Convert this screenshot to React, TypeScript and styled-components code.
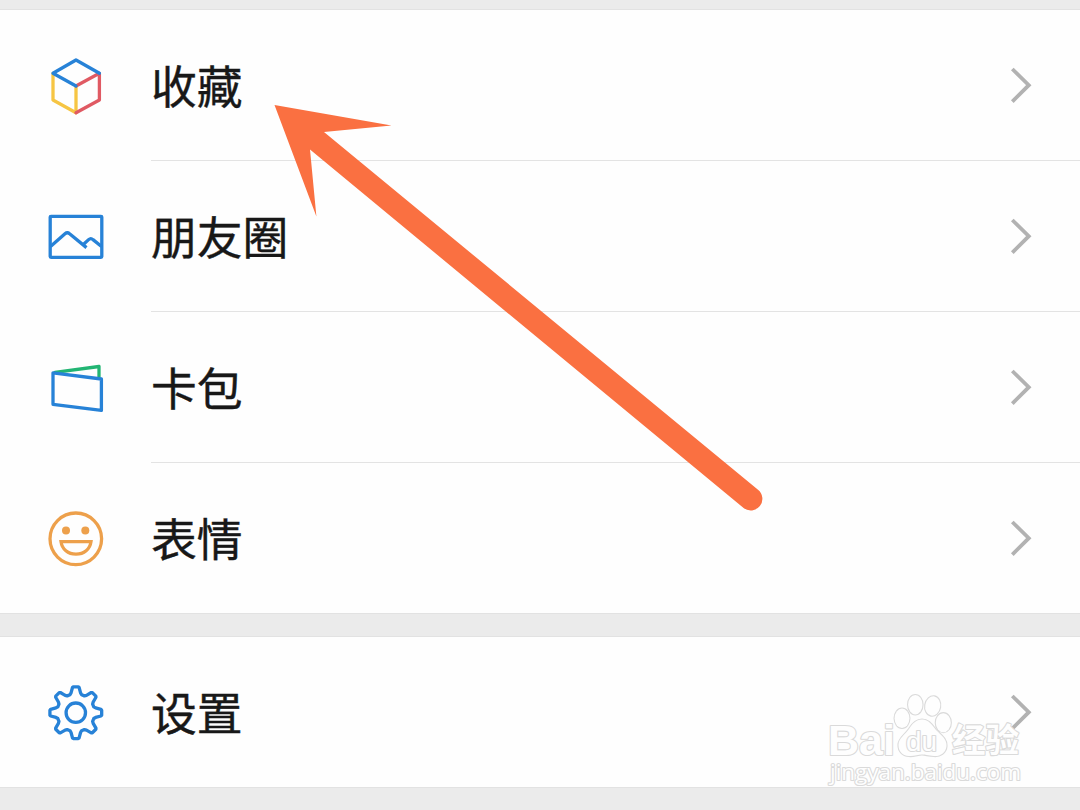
import React from "react";
import styled, { createGlobalStyle } from "styled-components";

// ===================== GLOBAL =====================
const GlobalStyle = createGlobalStyle`
  * { box-sizing: border-box; }
  body {
    margin: 0;
    background: #ebebeb;
    font-family: "Noto Sans CJK SC", sans-serif;
  }
`;

// ===================== STYLED COMPONENTS =====================
const Screen = styled.main`
  position: relative;
  width: 1080px;
  height: 810px;
  overflow: hidden;
  background: #ebebeb;
  padding-top: 9px;
  display: flex;
  flex-direction: column;
  gap: 22px;
`;

const Group = styled.section`
  background: #fefefe;
  border-top: 1px solid #e2e2e2;
  border-bottom: 1px solid #e2e2e2;
`;

const Row = styled.div`
  display: flex;
  align-items: flex-start;
  padding-left: 46px;
`;

const IconBox = styled.div`
  display: flex;
  align-items: center;
  width: 105px;
  height: 150px;

  svg {
    display: block;
    width: 60px;
    height: 60px;
    fill: none;
    stroke-width: 3.3;
    stroke-linecap: round;
    stroke-linejoin: round;
  }
`;

const RowBody = styled.div<{ $divider: boolean }>`
  flex: 1;
  height: ${({ $divider }) => ($divider ? "151px" : "150px")};
  display: flex;
  align-items: center;
  justify-content: space-between;
  padding-right: 47px;
  border-bottom: ${({ $divider }) => ($divider ? "1px solid #e3e3e3" : "none")};
`;

const Label = styled.span`
  font-size: 45.8px;
  line-height: 60px;
  color: #181818;
  padding-bottom: 3px;
  -webkit-text-stroke: 0.4px #181818;
`;

const Chevron = styled.svg`
  display: block;
  width: 24px;
  height: 40px;
  fill: none;
  stroke: #b2b2b2;
  stroke-width: 3.8;
`;

const Overlay = styled.svg`
  position: absolute;
  top: 0;
  left: 0;
  pointer-events: none;
`;

// ===================== ICONS =====================
const BLUE = "#2782d7";

const CubeIcon = () => (
  <svg viewBox="0 0 60 60">
    <path d="M7 18.3V45L30 57.7V31" stroke="#f6c543" />
    <path d="M30 57.7L53.4 45V18.3L30 31" stroke="#e05a63" />
    <path d="M30 31L7 18.3L30 5L53.4 18.3" stroke={BLUE} />
  </svg>
);

const PhotoIcon = () => (
  <svg viewBox="0 0 60 60" stroke={BLUE}>
    <rect x="4.2" y="10.3" width="51.6" height="41" rx="0.8" />
    <path
      d="M4.5 40.5L19 27.8Q21.3 25.8 23.6 27.8L40.5 41.6M36.5 39.3L42.6 33.6Q44.8 31.6 47 33.6L55.5 40.5"
      strokeLinecap="butt"
    />
  </svg>
);

const CardIcon = () => (
  <svg viewBox="0 0 60 60">
    <path d="M9 15.3L53 9.5V20" stroke="#22b573" />
    <path d="M7 15.8L55.4 22V53.4L7 47.3Z" stroke={BLUE} />
  </svg>
);

const SmileIcon = () => (
  <svg viewBox="0 0 60 60" stroke="#eda04b">
    <circle cx="29.8" cy="30.8" r="25.8" />
    <circle cx="20" cy="22.5" r="4" fill="#eda04b" stroke="none" />
    <circle cx="39.3" cy="22.5" r="4" fill="#eda04b" stroke="none" />
    <path d="M15 33.6H45C44 41.2 38 46.2 30 46.2S16 41.2 15 33.6Z" strokeLinejoin="miter" />
  </svg>
);

const TEETH = [0, 45, 90, 135, 180, 225, 270, 315];

// each tooth as [angle offset, radius] pairs
const TOOTH = [
  [-18, 18.9],
  [-13.5, 20.4],
  [-7.5, 25.4],
  [-5.5, 26],
  [5.5, 26],
  [7.5, 25.4],
  [13.5, 20.4],
  [18, 18.9],
];

const gearPoints = TEETH.flatMap((tooth) =>
  TOOTH.map(([offset, radius]) => {
    const a = ((tooth + offset) * Math.PI) / 180;
    return `${(29.8 + radius * Math.sin(a)).toFixed(2)},${(30.7 - radius * Math.cos(a)).toFixed(2)}`;
  }),
).join(" ");

const GearIcon = () => (
  <svg viewBox="0 0 60 60" stroke={BLUE}>
    <polygon points={gearPoints} />
    <circle cx="29.8" cy="30.7" r="9.7" />
  </svg>
);

// ===================== OVERLAYS =====================
const Arrow = () => (
  <Overlay width="1080" height="810" viewBox="0 0 1080 810">
    <path
      d="M274.5 105L391.5 125.5L324 132L758 489.8A11.6 11.6 0 0 1 743.6 508L310 149.6L316.4 216.5Z"
      fill="#fa7041"
    />
  </Overlay>
);

const Mark = styled.g`
  fill: #fefefe;
  stroke: #dadada;
  stroke-width: 2.2;
  stroke-linejoin: round;
  paint-order: stroke;
  font-family: "Open Sans", sans-serif;
`;

const Watermark = () => (
  <Overlay width="1080" height="810" viewBox="0 0 1080 810">
    <Mark>
      <text x="828" y="754.5" fontSize="43" fontWeight="700" fontFamily="Liberation Sans" textLength="67" lengthAdjust="spacingAndGlyphs">
        Bai
      </text>
      <g strokeWidth="2.2">
        <ellipse cx="902" cy="718.3" rx="7.4" ry="9.7" />
        <ellipse cx="915.3" cy="704.7" rx="7.2" ry="9.7" />
        <ellipse cx="932.7" cy="706" rx="7.5" ry="9.7" transform="rotate(10 932.7 706)" />
        <ellipse cx="943.3" cy="722.7" rx="7.5" ry="9.5" />
        <path d="M922 719.5C929 719.5 932 725 936 730C941 735 947 739 946.5 746C946 753 940 756.5 934 756C928 755.5 925 754.5 922 754.5C918 754.5 914 756.5 909 756C902 755.5 898.5 751 898.5 745C898.5 738 905 735 909 729C912 724 916 719.5 922 719.5Z" />
      </g>
      <text x="906" y="750.5" fontSize="27" fontFamily="Liberation Sans" textLength="31" lengthAdjust="spacingAndGlyphs">
        du
      </text>
      <text x="952" y="752" fontSize="33.5" fontWeight="700" fontFamily="Noto Sans CJK SC" textLength="67" lengthAdjust="spacingAndGlyphs">
        经验
      </text>
      <text x="830" y="780" fontSize="22" textLength="191" lengthAdjust="spacingAndGlyphs">
        jingyan.baidu.com
      </text>
    </Mark>
  </Overlay>
);

// ===================== COMPONENT =====================
const groups = [
  [
    { label: "收藏", icon: <CubeIcon /> },
    { label: "朋友圈", icon: <PhotoIcon /> },
    { label: "卡包", icon: <CardIcon /> },
    { label: "表情", icon: <SmileIcon /> },
  ],
  [{ label: "设置", icon: <GearIcon /> }],
];

const App: React.FC = () => {
  return (
    <>
      <GlobalStyle />
      <Screen>
        {groups.map((rows, i) => (
          <Group key={i}>
            {rows.map((row, j) => (
              <Row key={row.label}>
                <IconBox>{row.icon}</IconBox>
                <RowBody $divider={j < rows.length - 1}>
                  <Label>{row.label}</Label>
                  <Chevron viewBox="0 0 24 40">
                    <path d="M3.3 4L19.8 20.2L3.3 36.6" />
                  </Chevron>
                </RowBody>
              </Row>
            ))}
          </Group>
        ))}
        <Watermark />
        <Arrow />
      </Screen>
    </>
  );
};

export default App;
